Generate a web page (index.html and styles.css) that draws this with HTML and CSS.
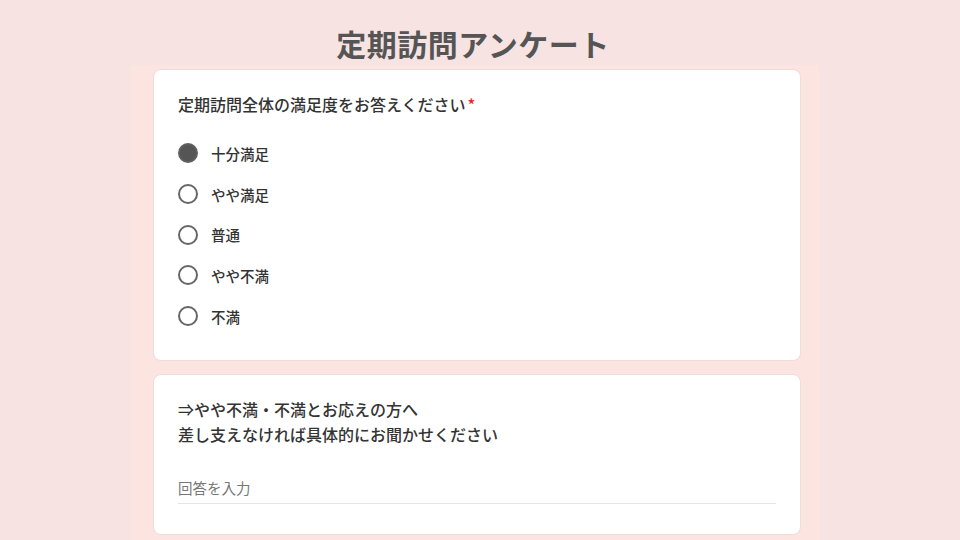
FILE: index.html
```html
<!DOCTYPE html>
<html lang="ja">
<head>
<meta charset="utf-8">
<title>定期訪問アンケート</title>
<link rel="stylesheet" href="styles.css">
</head>
<body>
<h1 class="title">定期訪問アンケート</h1>
<main class="panel">
  <section class="card card-q1">
    <p class="question">定期訪問全体の満足度をお答えください<span class="req">*</span></p>
    <ul class="options">
      <li class="option"><span class="radio checked"></span><span class="label">十分満足</span></li>
      <li class="option"><span class="radio"></span><span class="label">やや満足</span></li>
      <li class="option"><span class="radio"></span><span class="label">普通</span></li>
      <li class="option"><span class="radio"></span><span class="label">やや不満</span></li>
      <li class="option"><span class="radio"></span><span class="label">不満</span></li>
    </ul>
  </section>
  <section class="card card-q2">
    <p class="question q2">⇒やや不満・不満とお応えの方へ<br>差し支えなければ具体的にお聞かせください</p>
    <div class="answer">回答を入力</div>
  </section>
</main>
</body>
</html>
```
FILE: styles.css
```css
* { box-sizing: border-box; }
html, body { margin: 0; padding: 0; }
body {
  background: #f8e3e3;
  font-family: "Noto Sans CJK JP", "Noto Sans", sans-serif;
  color: #333;
  width: 960px;
  height: 540px;
  overflow: hidden;
}
.title {
  margin: 0;
  padding: 22px 14px 0 0;
  text-align: center;
  font-size: 30px;
  line-height: 43px;
  font-weight: 700;
  color: #555;
  letter-spacing: 0.5px;
}
.panel {
  margin-left: 130px;
  width: 690px;
  background: #fce5e0;
  padding: 4px 19px 20px 23px;
  display: flex;
  flex-direction: column;
  gap: 13px;
}
.card {
  background: #fff;
  border: 1px solid #eedcdc;
  border-radius: 8px;
  padding: 0 24px;
}
.card-q1 { padding-top: 22px; padding-bottom: 24px; }
.card-q2 { padding-top: 22px; padding-bottom: 30px; }
.question {
  margin: 0;
  font-size: 16px;
  line-height: 24px;
  font-weight: 500;
  color: #333;
}
.q2 { line-height: 25px; }
.req { color: #d93025; margin-left: 2px; }
.options {
  list-style: none;
  margin: 17px 0 0;
  padding: 0;
}
.option {
  height: 40.7px;
  display: flex;
  align-items: center;
  gap: 13px;
}
.radio {
  width: 20px;
  height: 20px;
  border-radius: 50%;
  border: 2px solid #666;
  flex: none;
}
.radio.checked {
  background: #555;
  border-color: #5f5f5f;
}
.label {
  font-size: 14.5px;
  font-weight: 500;
  color: #333;
}
.answer {
  margin-top: 29px;
  font-size: 14.5px;
  line-height: 24px;
  color: #777;
  border-bottom: 1px solid #e6e6e6;
  padding-bottom: 3px;
}
```
